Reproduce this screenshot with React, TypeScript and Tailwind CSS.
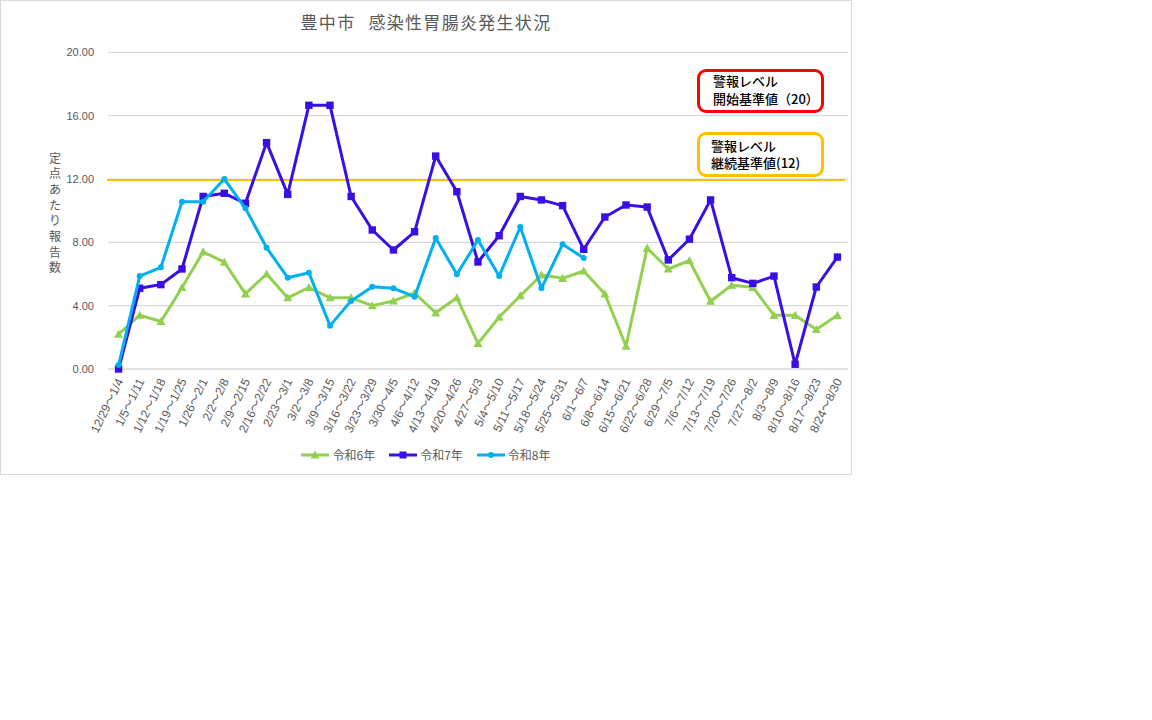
import React from "react";

const labels = [
  "12/29～1/4","1/5～1/11","1/12～1/18","1/19～1/25","1/26～2/1","2/2～2/8","2/9～2/15","2/16～2/22","2/23～3/1","3/2～3/8","3/9～3/15","3/16～3/22","3/23～3/29","3/30～4/5","4/6～4/12","4/13～4/19","4/20～4/26","4/27～5/3","5/4～5/10","5/11～5/17","5/18～5/24","5/25～5/31","6/1～6/7","6/8～6/14","6/15～6/21","6/22～6/28","6/29～7/5","7/6～7/12","7/13～7/19","7/20～7/26","7/27～8/2","8/3～8/9","8/10～8/16","8/17～8/23","8/24～8/30",
];

const r6 = [2.2,3.4,3.0,5.15,7.4,6.75,4.75,6.0,4.5,5.15,4.5,4.5,4.0,4.3,4.8,3.55,4.5,1.62,3.27,4.63,5.94,5.73,6.19,4.74,1.45,7.64,6.32,6.84,4.28,5.29,5.16,3.39,3.39,2.5,3.39];
const r7 = [0,5.1,5.33,6.32,10.9,11.1,10.47,14.3,11.03,16.66,16.66,10.9,8.78,7.52,8.67,13.45,11.2,6.76,8.42,10.9,10.68,10.32,7.56,9.6,10.36,10.23,6.89,8.2,10.68,5.77,5.41,5.87,0.3,5.18,7.07];
const r8 = [0.25,5.87,6.42,10.57,10.57,12.0,10.15,7.66,5.77,6.08,2.74,4.3,5.2,5.1,4.57,8.27,5.98,8.15,5.87,8.97,5.1,7.88,7.01];

const X0 = 108;
const X1 = 848;
const STEP = (X1 - X0) / 35;
const Y0 = 369;
const PXU = 15.83;
const cx = (i: number) => X0 + STEP * (i + 0.5);
const cy = (v: number) => Y0 - v * PXU;

const GREEN = "#92d050";
const PURPLE = "#3a0fe6";
const BLUE = "#00b0f0";

const pts = (d: number[]) => d.map((v, i) => `${cx(i).toFixed(1)},${cy(v).toFixed(1)}`).join(" ");

function Tri({ x, y, s = 4.5 }: { x: number; y: number; s?: number }) {
  return <polygon points={`${x},${y - s} ${x + s},${y + s * 0.8} ${x - s},${y + s * 0.8}`} fill={GREEN} />;
}

function LegendItem({ color, marker, label }: { color: string; marker: "tri" | "sq" | "dot"; label: string }) {
  return (
    <div className="flex items-center gap-[3px]">
      <svg width="28" height="12" viewBox="0 0 28 12">
        <line x1="0" y1="6" x2="28" y2="6" stroke={color} strokeWidth="3" />
        {marker === "tri" && <polygon points="14,1.5 18.5,9.5 9.5,9.5" fill={color} />}
        {marker === "sq" && <rect x="10.5" y="2.5" width="7" height="7" fill={color} />}
        {marker === "dot" && <circle cx="14" cy="6" r="3" fill={color} />}
      </svg>
      <span className="text-[12px] leading-none text-[#595959]">{label}</span>
    </div>
  );
}

export default function App() {
  const yTitle = "定点あたり報告数".split("");
  return (
    <div className="w-[1152px] h-[720px] bg-white font-['Liberation_Sans','Noto_Sans_CJK_JP',sans-serif]">
      <div className="relative w-[852px] h-[475px] border border-[#d9d9d9] bg-white">
        <div className="h-[41px] flex items-center justify-center text-[17px] tracking-[1.3px] text-[#595959] font-['Noto_Sans_CJK_JP',sans-serif]">
          <span>豊中市</span>
          <span className="ml-[13px]">感染性胃腸炎発生状況</span>
        </div>
        <svg width="850" height="398" viewBox="1 42 850 398" className="block">
          {[0, 4, 8, 12, 16, 20].map((v) => (
            <g key={v}>
              <line x1={X0} x2={X1} y1={cy(v)} y2={cy(v)} stroke="#d9d9d9" strokeWidth="1.3" />
              <text x={94} y={cy(v) + 4} textAnchor="end" fontSize="11" fill="#595959">
                {v.toFixed(2)}
              </text>
            </g>
          ))}
          <line x1={107} x2={845} y1={180} y2={180} stroke="#ffc000" strokeWidth="2" />
          {yTitle.map((c, i) => (
            <text key={i} x={55} y={162.5 + i * 15.7} textAnchor="middle" fontSize="12" fill="#595959" className="font-['Noto_Sans_CJK_JP',sans-serif]">
              {c}
            </text>
          ))}
          {labels.map((l, i) => (
            <text
              key={l}
              x={0}
              y={0}
              textAnchor="end"
              fontSize="12"
              fill="#595959"
              transform={`translate(${(cx(i) + 5).toFixed(1)},${381}) rotate(-64)`}
            >
              {l}
            </text>
          ))}
          <polyline points={pts(r6)} fill="none" stroke={GREEN} strokeWidth="3" strokeLinejoin="round" />
          {r6.map((v, i) => (
            <Tri key={i} x={cx(i)} y={cy(v)} />
          ))}
          <polyline points={pts(r7)} fill="none" stroke={PURPLE} strokeWidth="3" strokeLinejoin="round" />
          {r7.map((v, i) => (
            <rect key={i} x={cx(i) - 3.7} y={cy(v) - 3.7} width="7.4" height="7.4" fill={PURPLE} />
          ))}
          <polyline points={pts(r8)} fill="none" stroke={BLUE} strokeWidth="3" strokeLinejoin="round" />
          {r8.map((v, i) => (
            <circle key={i} cx={cx(i)} cy={cy(v)} r="3" fill={BLUE} />
          ))}
        </svg>
        <div className="h-[32px] pb-[3px] flex items-center justify-center gap-[14px] font-['Noto_Sans_CJK_JP',sans-serif]">
          <LegendItem color={GREEN} marker="tri" label="令和6年" />
          <LegendItem color={PURPLE} marker="sq" label="令和7年" />
          <LegendItem color={BLUE} marker="dot" label="令和8年" />
        </div>

        <div className="absolute left-[696px] top-[68px] w-[127px] h-[44px] border-[3px] border-[#ff0000] rounded-[9px] bg-white pl-[13px] pb-[3px] flex flex-col justify-center text-[13px] leading-[17.5px] font-medium text-black font-['Noto_Sans_CJK_JP',sans-serif]">
          <span>警報レベル</span>
          <span>開始基準値（20）</span>
        </div>
        <div className="absolute left-[696px] top-[131px] w-[127px] h-[45px] border-[3px] border-[#ffc000] rounded-[9px] bg-white pl-[11px] pb-[2px] flex flex-col justify-center text-[13px] leading-[17px] font-medium text-black font-['Noto_Sans_CJK_JP',sans-serif]">
          <span>警報レベル</span>
          <span>継続基準値(12)</span>
        </div>
      </div>
    </div>
  );
}
